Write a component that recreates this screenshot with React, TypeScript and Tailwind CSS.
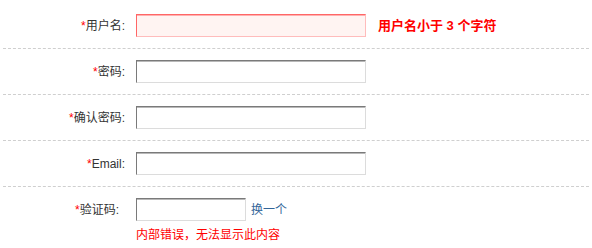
import React from "react";

const font = { fontFamily: '"Liberation Sans", "Noto Sans CJK SC", sans-serif' };

const inputBase =
  "block h-[23px] border border-[#dcdcdc] border-t-[#7a7a7a] border-l-[#7a7a7a] bg-white shadow-[inset_0_1px_0_#b8b8b8] outline-none px-1 text-[12px]";

const Label = ({ text, className = "" }: { text: string; className?: string }) => (
  <label className={`w-[125px] shrink-0 text-right text-[12px] leading-[16px] text-[#333] ${className}`}>
    <span className="text-[#f00]">*</span>
    {text}:
  </label>
);

const Row = ({ children, last = false }: { children: React.ReactNode; last?: boolean }) => (
  <div className={`mx-[3px] py-[11px] ${last ? "" : "border-b border-dashed border-[#cfcfcf]"}`}>
    {children}
  </div>
);

export default function App() {
  return (
    <div className="w-[592px] h-[248px] bg-white pt-[3px] overflow-hidden" style={font}>
      <Row>
        <div className="flex items-center">
          <Label text="用户名" className="-ml-[3px]" />
          <input
            className="block h-[23px] w-[230px] ml-[11px] border border-[#ffbcbc] border-t-[#ff6666] border-l-[#ff6666] bg-[#fff4f2] shadow-[inset_0_1px_0_#ffb0b0] outline-none px-1"
          />
          <span className="ml-[12px] text-[13px] font-bold text-[#f00] leading-[16px]">用户名小于 3 个字符</span>
        </div>
      </Row>
      <Row>
        <div className="flex items-center">
          <Label text="密码" className="-ml-[3px]" />
          <input type="password" className={`${inputBase} w-[230px] ml-[11px]`} />
        </div>
      </Row>
      <Row>
        <div className="flex items-center">
          <Label text="确认密码" className="-ml-[3px]" />
          <input type="password" className={`${inputBase} w-[230px] ml-[11px]`} />
        </div>
      </Row>
      <Row>
        <div className="flex items-center">
          <Label text="Email" className="-ml-[3px]" />
          <input className={`${inputBase} w-[230px] ml-[11px]`} />
        </div>
      </Row>
      <Row last>
        <div className="flex items-center">
          <Label text="验证码" className="-ml-[3px] pr-[6px]" />
          <input className={`${inputBase} w-[110px] ml-[11px]`} />
          <a className="ml-[5px] text-[12px] leading-[16px] text-[#336699] cursor-pointer">换一个</a>
        </div>
        <div className="ml-[133px] mt-[6px] text-[12px] leading-[16px] text-[#f00]">内部错误，无法显示此内容</div>
      </Row>
    </div>
  );
}
